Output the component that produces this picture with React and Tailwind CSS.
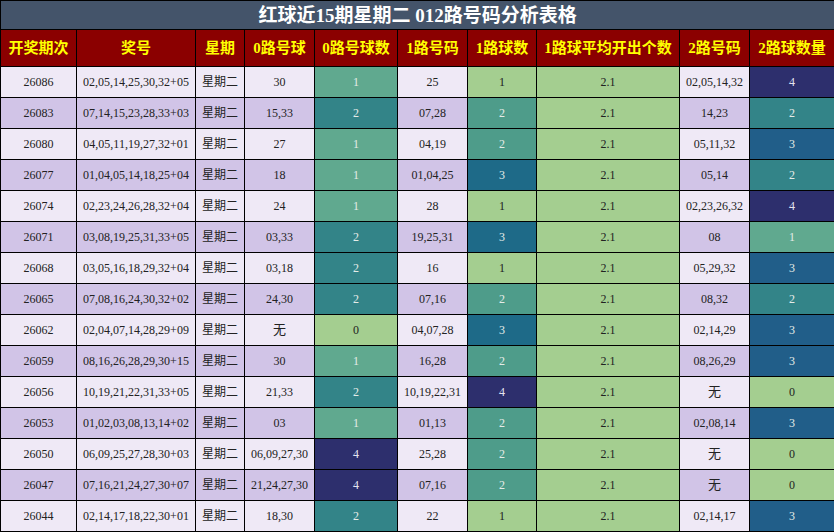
const rows = [
  ['26086', '02,05,14,25,30,32+05', '30', 1, '25', 1, '02,05,14,32', 4],
  ['26083', '07,14,15,23,28,33+03', '15,33', 2, '07,28', 2, '14,23', 2],
  ['26080', '04,05,11,19,27,32+01', '27', 1, '04,19', 2, '05,11,32', 3],
  ['26077', '01,04,05,14,18,25+04', '18', 1, '01,04,25', 3, '05,14', 2],
  ['26074', '02,23,24,26,28,32+04', '24', 1, '28', 1, '02,23,26,32', 4],
  ['26071', '03,08,19,25,31,33+05', '03,33', 2, '19,25,31', 3, '08', 1],
  ['26068', '03,05,16,18,29,32+04', '03,18', 2, '16', 1, '05,29,32', 3],
  ['26065', '07,08,16,24,30,32+02', '24,30', 2, '07,16', 2, '08,32', 2],
  ['26062', '02,04,07,14,28,29+09', '无', 0, '04,07,28', 3, '02,14,29', 3],
  ['26059', '08,16,26,28,29,30+15', '30', 1, '16,28', 2, '08,26,29', 3],
  ['26056', '10,19,21,22,31,33+05', '21,33', 2, '10,19,22,31', 4, '无', 0],
  ['26053', '01,02,03,08,13,14+02', '03', 1, '01,13', 2, '02,08,14', 3],
  ['26050', '06,09,25,27,28,30+03', '06,09,27,30', 4, '25,28', 2, '无', 0],
  ['26047', '07,16,21,24,27,30+07', '21,24,27,30', 4, '07,16', 2, '无', 0],
  ['26044', '02,14,17,18,22,30+01', '18,30', 2, '22', 1, '02,14,17', 3],
]

/* colour scales per count column */
const zeroScale = {
  0: 'bg-[#a4ce90] text-[#222]',
  1: 'bg-[#60a98f] text-[#e4ece8]',
  2: 'bg-[#338488] text-[#e4ece8]',
  4: 'bg-[#2d2f6d] text-[#e4e4ee]',
}
const oneScale = {
  1: 'bg-[#a4ce90] text-[#222]',
  2: 'bg-[#4e9c8a] text-[#e4ece8]',
  3: 'bg-[#1e6a88] text-[#e4ece8]',
  4: 'bg-[#2d2f6d] text-[#e4e4ee]',
}
const twoScale = {
  0: 'bg-[#a4ce90] text-[#222]',
  1: 'bg-[#60a98f] text-[#e4ece8]',
  2: 'bg-[#338488] text-[#e4ece8]',
  3: 'bg-[#215e89] text-[#e4ece8]',
  4: 'bg-[#2d2f6d] text-[#e4e4ee]',
}

const heads = ['开奖期次', '奖号', '星期', '0路号球', '0路号球数', '1路号码', '1路球数', '1路球平均开出个数', '2路号码', '2路球数量']
const widths = [76, 119, 49, 70, 83, 70, 69, 143, 70, 85]

export default function App() {
  return (
    <div className="w-[834px] h-[532px] bg-white overflow-hidden" style={{ fontFamily: '"Liberation Serif", "Noto Sans CJK SC", serif' }}>
      <table className="w-[834px] table-fixed border-collapse border border-black">
        <colgroup>
          {widths.map((w, i) => <col key={i} style={{ width: w }} />)}
        </colgroup>
        <tbody>
          <tr className="h-[29px]">
            <td colSpan={10} className="bg-[#44546a] border border-black text-center text-white font-bold text-[19px] leading-none p-0">
              红球近15期星期二 012路号码分析表格
            </td>
          </tr>
          <tr className="h-[37px]">
            {heads.map((h) => (
              <td key={h} className="bg-[#8b0000] border border-black text-center text-[#ffff00] font-bold text-[15px] p-0 whitespace-nowrap">
                {h}
              </td>
            ))}
          </tr>
          {rows.map((r, i) => {
            const bg = i % 2 === 0 ? 'bg-[#efe9f6]' : 'bg-[#d1c4e7]'
            const plain = `${bg} border border-black text-center text-[12px] text-[#222] p-0 whitespace-nowrap`
            const num = 'border border-black text-center text-[12px] p-0'
            return (
              <tr key={r[0]} className="h-[31px]">
                <td className={plain}>{r[0]}</td>
                <td className={plain}>{r[1]}</td>
                <td className={plain}>星期二</td>
                <td className={`${plain} ${r[2] === '无' ? 'text-[13px]' : ''}`}>{r[2]}</td>
                <td className={`${num} ${zeroScale[r[3]]}`}>{r[3]}</td>
                <td className={plain}>{r[4]}</td>
                <td className={`${num} ${oneScale[r[5]]}`}>{r[5]}</td>
                <td className={`${num} bg-[#a4ce90] text-[#222]`}>2.1</td>
                <td className={`${plain} ${r[6] === '无' ? 'text-[13px]' : ''}`}>{r[6]}</td>
                <td className={`${num} ${twoScale[r[7]]}`}>{r[7]}</td>
              </tr>
            )
          })}
        </tbody>
      </table>
    </div>
  )
}
